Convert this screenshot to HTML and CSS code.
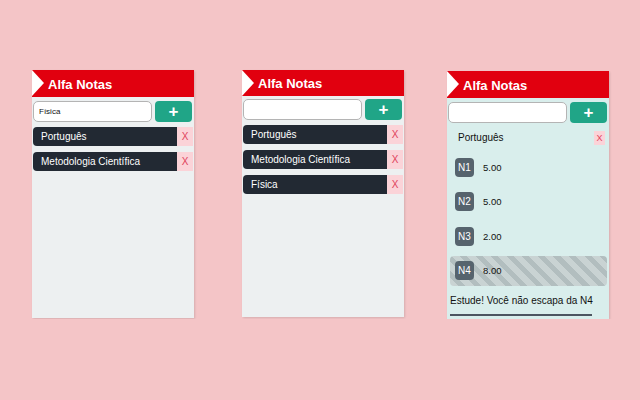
FILE: index.html
```html
<!DOCTYPE html>
<html lang="pt-BR">
<head>
	<meta charset="UTF-8">
	<title>Alfa Notas</title>
	<link rel="stylesheet" href="styles.css">
</head>
<body>
	<div class="tela">
		<!-- popup 1: digitando -->
		<div class="popup">
			<div class="topo"><h1>Alfa Notas</h1></div>
			<div class="form">
				<input class="campo" type="text" value="Física">
				<button class="add">+</button>
			</div>
			<ul class="materias">
				<li><span class="nome">Português</span><span class="del">X</span></li>
				<li><span class="nome">Metodologia Científica</span><span class="del">X</span></li>
			</ul>
		</div>

		<!-- popup 2: lista -->
		<div class="popup p2">
			<div class="topo"><h1>Alfa Notas</h1></div>
			<div class="form">
				<input class="campo" type="text" value="">
				<button class="add">+</button>
			</div>
			<ul class="materias">
				<li><span class="nome">Português</span><span class="del">X</span></li>
				<li><span class="nome">Metodologia Científica</span><span class="del">X</span></li>
				<li><span class="nome">Física</span><span class="del">X</span></li>
			</ul>
		</div>

		<!-- popup 3: notas -->
		<div class="popup p3">
			<div class="topo"><h1>Alfa Notas</h1></div>
			<div class="form">
				<input class="campo" type="text" value="">
				<button class="add">+</button>
			</div>
			<div class="detalhe">
				<div class="titulo"><span>Português</span><span class="del">X</span></div>
				<div class="nota"><span class="n">N1</span><span class="valor">5.00</span></div>
				<div class="nota"><span class="n">N2</span><span class="valor">5.00</span></div>
				<div class="nota"><span class="n">N3</span><span class="valor">2.00</span></div>
				<div class="nota falta"><span class="n">N4</span><span class="valor">8.00</span></div>
				<p class="aviso">Estude! Você não escapa da N4</p>
				<div class="linha"></div>
			</div>
		</div>
	</div>
</body>
</html>
```

FILE: styles.css
```css
/*reset*/
body{margin: 0; padding: 0; background-color: #f4c5c7; font-family: 'Liberation Sans', Arial, sans-serif;}
ul,p,h1{margin: 0; padding: 0;}
li{list-style: none;}

/*layout*/
.tela{display: flex; align-items: flex-start; padding: 70px 0 0 32px;}
.popup{width: 162px; height: 248px; background-color: #edf0f1; box-shadow: 1px 1px 2px rgba(0,0,0,.12); overflow: hidden;}
.p2{margin-left: 48px; height: 247px;}
.p3{margin-left: 43px; margin-top: 1px; background-color: #d9eeec;}

/*topo*/
.topo{height: 27px; background-color: #e1000f; position: relative; display: flex; align-items: center;}
.topo:before{content: ''; position: absolute; left: 0; top: 0; border-style: solid; border-width: 13.5px 0 13.5px 12px; border-color: transparent transparent transparent #fff;}
.topo h1{color: #fff; font-size: 13px; font-weight: bold; margin-left: 16px; margin-top: 1px;}
.p2 .topo{height: 26px;}
.p2 .topo:before{border-width: 13px 0 13px 12px;}

/*form*/
.form{display: flex; gap: 3px; padding: 4px 2px 0 1px;}
.p2 .form{padding-top: 3px;}
.campo{width: 119px; height: 21px; box-sizing: border-box; border: 1px solid #b4b4b4; border-radius: 5px; background: #fff; font-size: 8px; padding: 0 5px; font-family: inherit; color: #111; outline: none;}
.add{width: 37px; height: 21px; border: none; border-radius: 4px; background-color: #20a587; color: #fff; font-size: 17px; font-weight: bold; line-height: 21px; padding: 0; font-family: inherit;}

/*materias*/
.materias{padding: 5px 1px 0 1px;}
.materias li{display: flex; height: 19px; margin-bottom: 6px;}
.nome{width: 144px; box-sizing: border-box; padding-left: 8px; background-color: #222933; color: #fff; font-size: 10px; line-height: 19px; border-radius: 4px 0 0 4px; white-space: nowrap;}
.del{width: 16px; background-color: #fbd3d8; color: #e0445c; font-size: 10px; line-height: 19px; text-align: center;}

/*detalhe*/
.detalhe{padding: 6px 2px 0 3px;}
.titulo{display: flex; justify-content: space-between; align-items: center; height: 17px; padding-left: 8px; font-size: 10px; color: #111;}
.titulo .del{width: 11px; height: 14px; line-height: 14px; margin-right: 2px; background-color: #fbd3d8; font-size: 9px;}
.nota{display: flex; align-items: center; height: 30px; margin-top: 4.5px; padding-left: 5px; border-radius: 4px;}
.titulo + .nota{margin-top: 6px;}
.n{width: 19px; height: 19px; border-radius: 4px; background-color: #56636d; color: #fff; font-size: 10px; line-height: 19px; text-align: center;}
.valor{margin-left: 9px; font-size: 9.5px; color: #111;}
.falta{background: repeating-linear-gradient(45deg, #c9d3d3 0, #c9d3d3 6px, #b2bebf 6px, #b2bebf 11px);}
.aviso{font-size: 10px; color: #111; margin-top: 9px; line-height: 12px;}
.linha{width: 142px; height: 2px; background-color: #4c5560; margin: 7px 0 0 0;}
```
